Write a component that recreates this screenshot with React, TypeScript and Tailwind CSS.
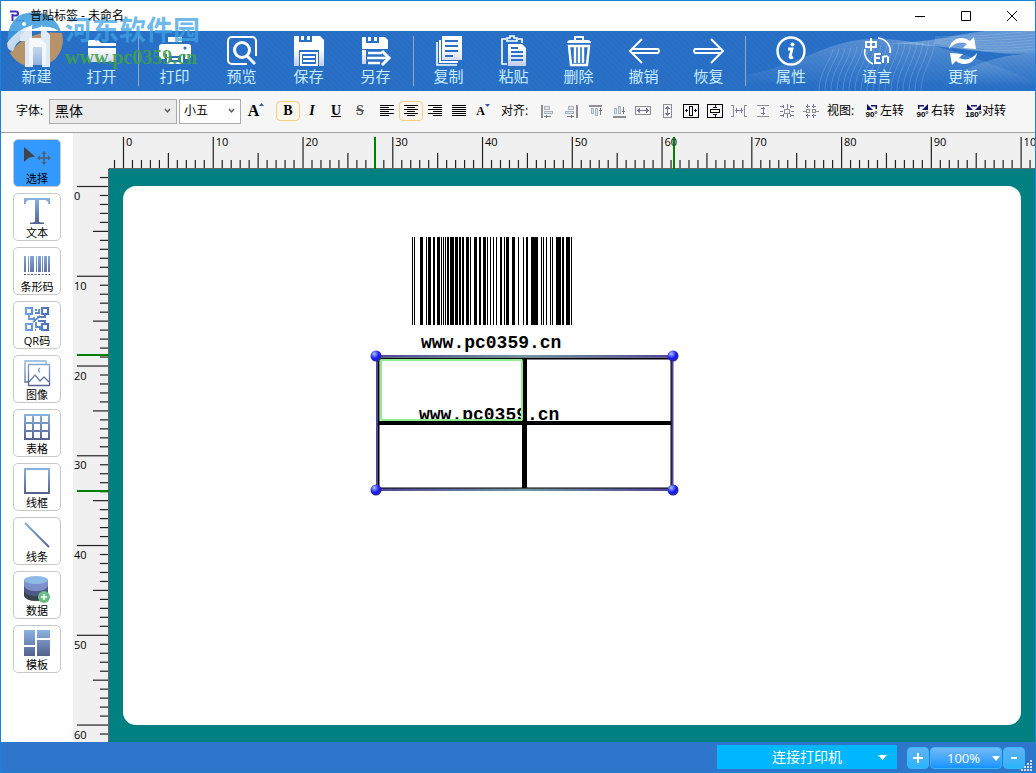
import type { ReactNode } from "react";
import clsx from "clsx";

const MM = 8.976;

/* ---------- ribbon icons (32 x 32) ---------- */

function RibbonIcon({ children }: { children: ReactNode }) {
  return (
    <svg width="32" height="32" viewBox="0 0 32 32" fill="none" stroke="white" strokeWidth="2.4" aria-hidden="true">
      {children}
    </svg>
  );
}

const newIcon = (
  <RibbonIcon>
    <path d="M8 3h11l6 6v21H8z" fill="url(#fade)" stroke="none" opacity="0.7" />
  </RibbonIcon>
);

const openIcon = (
  <RibbonIcon>
    <path d="M2 9V5h10l3 3h15v3H2z" fill="white" stroke="none" />
    <path d="M2 13h28v14H2z" fill="url(#fade)" stroke="none" />
  </RibbonIcon>
);

const printIcon = (
  <RibbonIcon>
    <path d="M9 2h14v5H9z" fill="white" stroke="none" />
    <path d="M3 9h26q3 0 3 3v9q0 3-3 3h-3v-5H6v5H3q-3 0-3-3v-9q0-3 3-3z" fill="white" stroke="none" />
    <path d="M9 20h14v8H9z" fill="#2a70c8" strokeWidth="2" />
    <path d="M13 24h6" strokeWidth="2" />
    <circle cx="26" cy="13" r="1.500" fill="#2a70c8" stroke="none" />
  </RibbonIcon>
);

const previewIcon = (
  <RibbonIcon>
    <path d="M21 29H6a4 4 0 0 1-4-4V6a4 4 0 0 1 4-4h20a4 4 0 0 1 4 4v15" strokeWidth="2" />
    <circle cx="16" cy="15" r="7.500" strokeWidth="3" />
    <path d="m21 21 8 8" strokeWidth="3" />
  </RibbonIcon>
);

const saveIcon = (
  <RibbonIcon>
    <path d="M1 1h5v6h13V1h8l4 4v10H1z" fill="white" stroke="none" />
    <path d="M8 1h3v4H8zM14 1h3v4h-3z" fill="white" stroke="none" />
    <path d="M1 15h5v16H1zM26 15h5v16h-5z" fill="url(#fade)" stroke="none" />
    <path d="M8 18h16v12H8z" fill="#2a70c8" strokeWidth="2" />
    <path d="M10 22h12M10 26h12" strokeWidth="2" />
  </RibbonIcon>
);

const saveAsIcon = (
  <RibbonIcon>
    <path d="M2 2h4v6h13V2h6l3 3v9H2z" fill="white" stroke="none" />
    <path d="M8 2h3v4H8zM14 2h3v4h-3z" fill="white" stroke="none" />
    <path d="M2 15h4v14H2z" fill="url(#fade)" stroke="none" />
    <path d="M8 18h14M8 28h12M7 23h21" strokeWidth="2.600" />
    <path d="m22 16 7 7-7 7" strokeWidth="3" />
  </RibbonIcon>
);

const copyIcon = (
  <RibbonIcon>
    <path d="M9 1h20v24H9z" fill="url(#fade)" stroke="none" />
    <path d="M12 6h13M12 11h13M12 16h13M12 21h8" stroke="#2a70c8" strokeWidth="2" />
    <path d="M7 5v22h18" strokeWidth="2" />
    <path d="M4 7v23h20" strokeWidth="1.600" />
  </RibbonIcon>
);

const pasteIcon = (
  <RibbonIcon>
    <path d="M8 4H4v25h5M20 4h4v4" strokeWidth="1.600" />
    <path d="M9 6V3h3V1h4v2h3v3z" strokeWidth="1.600" />
    <path d="M10 9h14l4 4v18H10z" fill="url(#fade)" stroke="none" />
    <path d="M13 13h7M13 17h12M13 21h12M13 25h12" stroke="#2a70c8" strokeWidth="1.800" />
  </RibbonIcon>
);

const deleteIcon = (
  <RibbonIcon>
    <path d="M4 8q0-3 4-3h16q4 0 4 3z" fill="white" stroke="none" />
    <path d="M12 5V2h8v3" strokeWidth="2" />
    <path d="M6 11h20l-2 19H8z" strokeWidth="2.400" />
    <path d="M12 12v16M16 12v16M20 12v16" strokeWidth="2.400" />
  </RibbonIcon>
);

const undoIcon = (
  <RibbonIcon>
    <path d="M14 4 2 16l12 12" strokeWidth="2" />
    <path d="M4 14h26q2 2 0 4H4" strokeWidth="1.800" />
  </RibbonIcon>
);

const redoIcon = (
  <RibbonIcon>
    <path d="m18 4 12 12-12 12" strokeWidth="2" />
    <path d="M28 14H2q-2 2 0 4h26" strokeWidth="1.800" />
  </RibbonIcon>
);

const infoIcon = (
  <RibbonIcon>
    <circle cx="16" cy="16" r="13.500" strokeWidth="2.400" />
    <circle cx="17.500" cy="9.500" r="2" fill="white" stroke="none" />
    <path d="M13 14h4l-2 8q0 1.500 3 0" strokeWidth="2.800" />
  </RibbonIcon>
);

const languageIcon = (
  <RibbonIcon>
    <path d="M17 3a13 13 0 0 1 12 15M4 14a13 13 0 0 0 8 15" strokeWidth="1.600" />
    <path d="M5 7h10v5H5zM10 3v13" strokeWidth="2" />
    <path d="M20 19h-6v9h6M14 23h5M22 28v-6q5-2 5 1v5" strokeWidth="2" />
  </RibbonIcon>
);

const updateArrow = "M2 14C3 5 14-1 23 6l4-4 2 12-13-1 4-4C13 6 7 8 2 14z";

const updateIcon = (
  <RibbonIcon>
    <g fill="white" stroke="none">
      <path d={updateArrow} />
      <path d={updateArrow} transform="rotate(180 16 16)" />
    </g>
  </RibbonIcon>
);

type RibbonItem = { label: string; icon: ReactNode };

const ribbonGroups: { width: string; items: RibbonItem[] }[] = [
  { width: "w-[65px]", items: [{ label: "新建", icon: newIcon }, { label: "打开", icon: openIcon }] },
  {
    width: "w-[67px]",
    items: [
      { label: "打印", icon: printIcon },
      { label: "预览", icon: previewIcon },
      { label: "保存", icon: saveIcon },
      { label: "另存", icon: saveAsIcon }
    ]
  },
  {
    width: "w-[65px]",
    items: [
      { label: "复制", icon: copyIcon },
      { label: "粘贴", icon: pasteIcon },
      { label: "删除", icon: deleteIcon },
      { label: "撤销", icon: undoIcon },
      { label: "恢复", icon: redoIcon }
    ]
  },
  {
    width: "w-[86px]",
    items: [
      { label: "属性", icon: infoIcon },
      { label: "语言", icon: languageIcon },
      { label: "更新", icon: updateIcon }
    ]
  }
];

function Waves() {
  return (
    <svg className="absolute inset-y-0 right-0" width="300" height="60" viewBox="0 0 300 60" fill="none" aria-hidden="true">
      <path d="M10 44C70 34 90 8 140 8S230 22 300 50V60H10z" fill="url(#mist)" />
      <path d="M150 12C200 12 220 3 250 0H300V22C260 26 220 14 150 12z" fill="white" opacity="0.28" />
      <path d="M200 60C230 34 260 24 300 22V60z" fill="url(#mist)" />
      <g stroke="white" strokeWidth="1" opacity="0.16">
        {Array.from({ length: 18 }, (_, i) => (
          <path key={i} d={`M${84 + i * 6} 60C${84 + i * 6} 40 ${96 + i * 6} 30 ${98 + i * 6} ${18 - i / 2}`} />
        ))}
        {Array.from({ length: 7 }, (_, i) => (
          <path key={i} d={`M200 ${12 - i}Q250 ${24 - i * 3} 300 ${18 - i * 3}`} />
        ))}
      </g>
    </svg>
  );
}

function Ribbon() {
  return (
    <nav className="relative flex h-[60px] shrink-0 items-stretch overflow-hidden bg-[#2971c7] bg-[repeating-linear-gradient(45deg,#0000_0_2px,#0d4da014_2px_4px)] pl-[3px]">
      <Waves />
      {ribbonGroups.map((group, i) => (
        <div key={group.items[0].label} className="relative flex">
          {i > 0 ? <span className="my-[5px] mr-[2px] ml-1 w-px bg-[#9aa5b5]" /> : null}
          {group.items.map((item) => (
            <button key={item.label} className={clsx("flex flex-col items-center pt-1", group.width)}>
              {item.icon}
              <span className="text-[15px] leading-[18px] text-[#c9edff]">{item.label}</span>
            </button>
          ))}
        </div>
      ))}
    </nav>
  );
}

/* ---------- format bar ---------- */

function Chevron({ className }: { className?: string }) {
  return (
    <svg className={clsx("pointer-events-none absolute top-[9px]", className)} width="7" height="6" viewBox="0 0 7 6" fill="none" stroke="#555" strokeWidth="1.300" aria-hidden="true">
      <path d="m1 1 2.500 3L6 1" />
    </svg>
  );
}

function SmallIcon({ children }: { children: ReactNode }) {
  return (
    <svg width="16" height="16" viewBox="0 0 16 16" fill="none" stroke="#8d8d94" shapeRendering="crispEdges" aria-hidden="true">
      {children}
    </svg>
  );
}

function ToolButton({ label, active, children }: { label: string; active?: boolean; children: ReactNode }) {
  return (
    <button
      aria-label={label}
      aria-pressed={active}
      className={clsx("flex h-5 w-6 items-center justify-center", active && "rounded-sm border border-[#f6cd85] bg-[#fbf6ec]")}
    >
      {children}
    </button>
  );
}

const paragraphs = [
  { label: "左对齐", lines: "M1 2.500h14M1 4.500h9M1 6.500h14M1 8.500h9M1 10.500h14M1 12.500h9" },
  { label: "居中", lines: "M1 2.500h14M4 4.500h8M1 6.500h14M4 8.500h8M1 10.500h14M4 12.500h8" },
  { label: "右对齐", lines: "M1 2.500h14M6 4.500h9M1 6.500h14M6 8.500h9M1 10.500h14M6 12.500h9" },
  { label: "两端对齐", lines: "M1 2.500h14M1 4.500h14M1 6.500h14M1 8.500h14M1 10.500h14M1 12.500h14" }
];

const arrangeIcons: { label: string; icon: ReactNode }[] = [
  {
    label: "左边对齐",
    icon: (
      <SmallIcon>
        <path d="M2 2h1v12H2z" />
        <path d="M5.500 3.500h5v3h-5zM5.500 8.500h8v2h-8z" fill="#dfe7ee" stroke="#a9b2ba" />
        <path d="M5 13.500h7M7.500 12v3M6.500 13v1" stroke="#777" />
      </SmallIcon>
    )
  },
  {
    label: "右边对齐",
    icon: (
      <SmallIcon>
        <path d="M13 2h1v12h-1z" />
        <path d="M5.500 3.500h5v3h-5zM2.500 8.500h8v2h-8z" fill="#dfe7ee" stroke="#a9b2ba" />
        <path d="M4 13.500h7M8.500 12v3M9.500 13v1" stroke="#777" />
      </SmallIcon>
    )
  },
  {
    label: "顶部对齐",
    icon: (
      <SmallIcon>
        <path d="M2 2h12v1H2z" />
        <path d="M4.500 5.500h2v5h-2zM8.500 5.500h2v7h-2z" fill="#dfe7ee" stroke="#a9b2ba" />
        <path d="M13.500 5v7M12 7.500h3" stroke="#777" />
      </SmallIcon>
    )
  },
  {
    label: "底部对齐",
    icon: (
      <SmallIcon>
        <path d="M2 13h12v1H2z" />
        <path d="M3.500 5.500h2v5h-2zM7.500 3.500h2v7h-2z" fill="#dfe7ee" stroke="#a9b2ba" />
        <path d="M12.500 4v7M11 8.500h3" stroke="#777" />
      </SmallIcon>
    )
  },
  {
    label: "等宽",
    icon: (
      <SmallIcon>
        <path d="M.5 3.500h15v8H.5z" />
        <path d="M2 7.500h12M4.500 5v5M11.500 5v5M3.500 6v3M12.500 6v3" stroke="#7774a8" />
      </SmallIcon>
    )
  },
  {
    label: "等高",
    icon: (
      <SmallIcon>
        <path d="M4.500 1.500h8v13h-8z" />
        <path d="M8.500 3v10M6 5.500h5M6 10.500h5M7 4.500h3M7 11.500h3" stroke="#7774a8" />
      </SmallIcon>
    )
  },
  {
    label: "水平居中",
    icon: (
      <SmallIcon>
        <path d="M.5 1.500h15v13H.5zM6.500 3.500h3v9h-3z" stroke="#000" />
        <path d="M2 7.500h3M11 7.500h3M3.500 6v3M12.500 6v3" stroke="#111140" />
      </SmallIcon>
    )
  },
  {
    label: "垂直居中",
    icon: (
      <SmallIcon>
        <path d="M.5 1.500h15v13H.5zM3.500 6.500h9v3h-9z" stroke="#000" />
        <path d="M8 2v3M8 11v3M6 4.500h4M6 11.500h4" stroke="#111140" />
      </SmallIcon>
    )
  },
  {
    label: "水平间距",
    icon: (
      <SmallIcon>
        <path d="M0 2.500h2.500v11H0M16 2.500h-2.500v11H16" />
        <path d="M4 7.500h8M5.500 5v5M10.500 5v5" stroke="#7774a8" />
      </SmallIcon>
    )
  },
  {
    label: "垂直间距",
    icon: (
      <SmallIcon>
        <path d="M2 2.500h12M2 13.500h12" />
        <path d="M8 4v8M6 5.500h4M6 10.500h4" stroke="#7774a8" />
      </SmallIcon>
    )
  },
  {
    label: "水平分布",
    icon: (
      <SmallIcon>
        <path d="M5.500 6.500h5v4h-5z" />
        <path d="M1 3.500h4M11 3.500h4M1 12.500h4M11 12.500h4M4.500 2v3M11.500 2v3M4.500 11v3M11.500 11v3M8.500 1v5M8.500 11v4M1 8.500h3M12 8.500h3" stroke="#7774a8" />
      </SmallIcon>
    )
  },
  {
    label: "垂直分布",
    icon: (
      <SmallIcon>
        <path d="M3.500 6.500h3v3h-3zM9.500 6.500h3v3h-3zM0 8h3M13 8h3" />
        <path d="M4.500 1v4M10.500 1v4M4.500 11v4M10.500 11v4M3 3.500h4M9 3.500h4M3 12.500h4M9 12.500h4" stroke="#7774a8" />
      </SmallIcon>
    )
  }
];

function RotateButton({ label, angle, d }: { label: string; angle: string; d: string }) {
  return (
    <button className="flex items-center gap-px text-xs">
      <span className="flex w-[15px] flex-col items-center font-['Liberation_Sans'] text-[8px] leading-[8px] font-bold">
        <svg width="14" height="7" viewBox="0 0 14 7" aria-hidden="true">
          <path d={d} fill="#10106a" />
        </svg>
        {angle}
      </span>
      {label}
    </button>
  );
}

function FontSizeIcon({ down }: { down?: boolean }) {
  return (
    <>
      <span className={clsx("font-['Liberation_Serif'] leading-4 font-bold", down ? "text-xs" : "text-base")}>A</span>
      <svg width="5" height="12" viewBox="0 0 5 12" className="self-start" aria-hidden="true">
        <path d={down ? "M0 3h5L2.500 6z" : "M0 5h5L2.500 2z"} fill="#3a54a0" />
      </svg>
    </>
  );
}

function FormatBar() {
  return (
    <div className="flex h-[42px] shrink-0 items-center overflow-hidden border-b border-[#a0a0a0] bg-[#f6f6f6] pb-px pl-[15px] text-xs whitespace-nowrap">
      <label htmlFor="font" className="w-[33px]">字体:</label>
      <div className="relative">
        <select id="font" className="h-[25px] w-32 appearance-none border border-[#acacac] bg-[#ebebeb] pl-[5px] text-sm leading-[22px]">
          <option>黑体</option>
        </select>
        <Chevron className="right-[6px]" />
      </div>
      <div className="relative ml-[2px]">
        <select aria-label="字号" className="h-[25px] w-[62px] appearance-none border border-[#acacac] bg-white pl-1 text-xs leading-[22px]">
          <option>小五</option>
        </select>
        <Chevron className="right-[6px]" />
      </div>
      <div className="ml-[3px] flex">
        <ToolButton label="增大字号"><FontSizeIcon /></ToolButton>
      </div>
      <div className="ml-2 flex font-['Liberation_Serif'] text-sm leading-4 font-bold">
        <ToolButton label="加粗" active>B</ToolButton>
        <ToolButton label="倾斜"><i>I</i></ToolButton>
        <ToolButton label="下划线"><u>U</u></ToolButton>
        <ToolButton label="删除线"><s className="text-[#555]">S</s></ToolButton>
      </div>
      <div className="ml-[3px] flex">
        {paragraphs.map((p) => (
          <ToolButton key={p.label} label={p.label} active={p.label === "居中"}>
            <svg width="16" height="16" viewBox="0 0 16 16" stroke="#000" shapeRendering="crispEdges" aria-hidden="true">
              <path d={p.lines} />
            </svg>
          </ToolButton>
        ))}
        <ToolButton label="减小字号"><FontSizeIcon down /></ToolButton>
      </div>
      <span className="ml-[6px] w-[34px]">对齐:</span>
      <div className="flex">
        {arrangeIcons.map((a) => (
          <ToolButton key={a.label} label={a.label}>{a.icon}</ToolButton>
        ))}
      </div>
      <span className="ml-1 w-[37px]">视图:</span>
      <div className="flex gap-[11px]">
        <RotateButton label="左转" angle="90°" d="M2 0v6h6zM6 1h6v4h-1.500V2.500H6z" />
        <RotateButton label="右转" angle="90°" d="M12 0v6H6zM8 1H2v4h1.500V2.500H8z" />
        <RotateButton label="对转" angle="180°" d="M0 0v6h6zM14 0v6H8zM4 1h6v1.500H4z" />
      </div>
    </div>
  );
}

/* ---------- tool column (26 x 26 icons) ---------- */

const tools: { label: string; icon: ReactNode }[] = [
  {
    label: "选择",
    icon: (
      <>
        <path d="M0 3v15l5-4.500 6-1z" fill="#404349" />
        <path d="M20 9v10M15 14h10" stroke="#4b5f7c" strokeWidth="1.600" />
        <path d="m20 7 2.500 3h-5zM20 21l2.500-3h-5zM13 14l3-2.500v5zM27 14l-3-2.500v5z" fill="#4b5f7c" />
      </>
    )
  },
  {
    label: "文本",
    icon: <path d="M0 0h26v6h-1.500Q24 2 20 2h-5v21q0 1.500 5 1.500V26H6v-1.500q5 0 5-1.500V2H6Q2 2 1.500 6H0z" fill="url(#steel)" />
  },
  {
    label: "条形码",
    icon: (
      <>
        <path d="M0 4h2v16H0zM4 4h1v16H4zM6 4h4v16H6zM12 4h1v16h-1zM14 4h3v16h-3zM18 4h1v16h-1zM20 4h3v16h-3zM24 4h2v16h-2z" fill="url(#steel)" />
        <path d="M0 22.500h26" stroke="#56618b" strokeDasharray="2 1.500" />
      </>
    )
  },
  {
    label: "QR码",
    icon: (
      <g fill="none" stroke="url(#sky)" strokeWidth="2.200">
        <path d="M2 2h6v6H2zM18 2h6v6h-6zM2 18h6v6H2zM18 18h6v6h-6z" />
        <path d="M11 7h4V3M11 4h2M5 9v4h5v-2M9 16l7-6M13 11h8V9M14 15h7v3M12 16v5h4v3M12 24h-1" strokeWidth="1.800" />
      </g>
    )
  },
  {
    label: "图像",
    icon: (
      <g fill="none" stroke="url(#steel)" strokeWidth="1.300">
        <path d="M4 22H1V1h21v3" />
        <path d="M4.500 4.500h21v21h-21z" fill="white" />
        <path d="m5 22 6-7 5 6 4-4 5 5" />
        <path d="M16 8q-3 2 0 4" />
      </g>
    )
  },
  {
    label: "表格",
    icon: (
      <path
        fillRule="evenodd"
        fill="url(#steel)"
        d="M0 0h26v26H0zM2 2v6h6V2zM10 2v6h6V2zM18 2v6h6V2zM2 10v6h6v-6zM10 10v6h6v-6zM18 10v6h6v-6zM2 18v6h6v-6zM10 18v6h6v-6zM18 18v6h6v-6z"
      />
    )
  },
  { label: "线框", icon: <path fillRule="evenodd" fill="url(#steel)" d="M0 0h26v26H0zM2 2v22h22V2z" /> },
  { label: "线条", icon: <path d="m1 1 24 24" stroke="url(#steel)" strokeWidth="2" /> },
  {
    label: "数据",
    icon: (
      <>
        <path d="M0 14v6q2 5 12 5t12-5v-6z" fill="#39444f" />
        <path d="M0 9v6q2 5 12 5t12-5V9z" fill="#4c5a86" />
        <path d="M0 4v6q2 5 12 5t12-5V4z" fill="#7c8fca" />
        <ellipse cx="12" cy="4" rx="12" ry="4" fill="#8fbbe4" />
        <circle cx="20" cy="21" r="6" fill="#6bbd86" />
        <path d="M20 18v6M17 21h6" stroke="white" strokeWidth="1.500" />
      </>
    )
  },
  { label: "模板", icon: <path d="M0 0h11v15H0zM13 0h13v8H13zM13 10h13v16H13zM0 17h11v9H0z" fill="url(#steel)" /> }
];

function ToolColumn() {
  return (
    <aside className="flex w-[72px] shrink-0 flex-col gap-[6px] bg-white pt-[6px] pl-3">
      {tools.map((tool, i) => (
        <button
          key={tool.label}
          className={clsx(
            "flex size-12 shrink-0 flex-col items-center rounded-[5px] border border-[#c8c8c8] pt-1",
            i === 0 && "bg-[#3399ff]"
          )}
        >
          <svg width="26" height="26" viewBox="0 0 26 26" className="shrink-0 overflow-visible" aria-hidden="true">
            {tool.icon}
          </svg>
          <span className="mt-px text-[11px] leading-4">{tool.label}</span>
        </button>
      ))}
    </aside>
  );
}

/* ---------- rulers ---------- */

// ticks from -1 mm up to the far edge of the window
function ticksFor(pixels: number) {
  return Array.from({ length: Math.floor(pixels / MM) + 2 }, (_, i) => i - 1);
}

function tickLength(n: number) {
  if (n % 10 === 0) return 32;
  return n % 5 === 0 ? 16 : 9;
}

function TopRuler() {
  const ticks = ticksFor(window.innerWidth - 124);
  return (
    <svg className="block h-9 w-full shrink-0 bg-[#f0f0f0]" aria-hidden="true">
      {ticks.map((n) => (
        <path key={n} d={`M${50.5 + n * MM} 36v-${tickLength(n)}`} stroke="#222" strokeWidth="1.200" />
      ))}
      <path d="M36 35.500h4000" stroke="#666" />
      {ticks.filter((n) => n % 10 === 0).map((n) => (
        <text key={n} x={53 + n * MM} y="13" fontSize="11">{n}</text>
      ))}
      <path d="M302 4v32M601 4v32" stroke="green" strokeWidth="2" />
    </svg>
  );
}

function SideRuler() {
  const ticks = ticksFor(window.innerHeight - 218);
  return (
    <svg className="block h-full w-9 shrink-0 bg-[#f0f0f0]" aria-hidden="true">
      {ticks.map((n) => (
        <path key={n} d={`M36 ${17.5 + n * MM}h-${tickLength(n)}`} stroke="#222" strokeWidth="1.200" />
      ))}
      <path d="M35.500 0v4000" stroke="#666" />
      {ticks.filter((n) => n % 10 === 0).map((n) => (
        <text key={n} x="1" y={31 + n * MM} fontSize="11">{n}</text>
      ))}
      <path d="M4 186h32M4 322h32" stroke="green" strokeWidth="2" />
    </svg>
  );
}

/* ---------- label canvas ---------- */

// [offset, width] of every bar
const bars = [
  [0, 1], [2, 1], [8, 3], [14, 1], [16, 3], [21, 2], [25, 3], [29, 1], [31, 1], [33, 1], [35, 2], [38, 4],
  [43, 3], [47, 2], [50, 2], [54, 3], [58, 1], [62, 3], [67, 2], [71, 3], [75, 1], [78, 1], [81, 1], [84, 1],
  [88, 2], [92, 1], [94, 3], [100, 3], [106, 1], [111, 1], [114, 2], [119, 7], [129, 1], [131, 1], [134, 1],
  [138, 1], [140, 1], [144, 5], [150, 2], [154, 4], [159, 1]
];

function Caption({ className }: { className: string }) {
  return (
    <p className={clsx("absolute font-['Liberation_Mono'] text-lg leading-6 font-bold", className)}>www.pc0359.cn</p>
  );
}

function SelectedTable() {
  return (
    <svg className="absolute top-[164px] left-[247px]" width="310" height="146" viewBox="0 0 310 146" fill="none" aria-hidden="true">
      <path d="M8.500 8.500h293v130h-293z" stroke="#000" strokeWidth="2" />
      <path d="M6 5h297v2.500H6zM6 138.500h297v2.500H6z" fill="url(#edge)" />
      <path d="M7 6v134M302.500 6v134" stroke="#51459a" strokeWidth="2" />
      <path d="M154.500 8v130" stroke="#000" strokeWidth="5" />
      <path d="M9 73h292" stroke="#000" strokeWidth="4" />
      <rect x="11" y="10" width="141" height="60" rx="1" stroke="#90ee90" strokeWidth="2" />
      {[6, 303].map((x) => [6, 140].map((y) => <circle key={`${x}-${y}`} cx={x} cy={y} r="5.500" fill="url(#ball)" />))}
    </svg>
  );
}

function Canvas() {
  return (
    <div className="flex min-w-0 flex-1 bg-[#008080] px-[14px] py-[17px]">
      <div className="relative flex-1 overflow-hidden rounded-[13px] bg-white">
        <svg className="absolute top-[51px] left-[289px]" width="160" height="88" shapeRendering="crispEdges" role="img" aria-label="条形码">
          {bars.map(([x, w]) => (
            <rect key={x} x={x} width={w} height="88" />
          ))}
        </svg>
        <Caption className="top-[145px] left-[298px]" />
        <Caption className="top-[217px] left-[296px]" />
        <SelectedTable />
      </div>
    </div>
  );
}

/* ---------- window frame ---------- */

function TitleBar() {
  return (
    <header className="flex h-[30px] shrink-0 items-center bg-white pl-[9px] text-xs">
      <svg width="16" height="14" viewBox="0 0 16 14" fill="none" stroke="#3d2fc4" strokeWidth="2" aria-hidden="true">
        <path d="M0 2.500h6q2 0 2 2t-2 2H2.500M2.500 5v7" />
        <path d="M6 11.500h8" strokeWidth="1.500" strokeDasharray="2 1" />
      </svg>
      <h1 className="relative z-10 ml-1 flex-1">普贴标签 - 未命名</h1>
      <button aria-label="最小化" className="flex h-full w-[46px] items-center justify-center">
        <svg width="11" height="11" stroke="#000" aria-hidden="true"><path d="M0 5.500h10" /></svg>
      </button>
      <button aria-label="最大化" className="flex h-full w-[46px] items-center justify-center">
        <svg width="11" height="11" stroke="#000" fill="none" aria-hidden="true"><path d="M.5.5h9v9h-9z" /></svg>
      </button>
      <button aria-label="关闭" className="flex h-full w-[46px] items-center justify-center">
        <svg width="11" height="11" stroke="#000" aria-hidden="true"><path d="m0 0 10 10M10 0 0 10" /></svg>
      </button>
    </header>
  );
}

function Watermark() {
  return (
    <div className="pointer-events-none absolute top-[10px] left-1 flex items-start">
      <svg width="60" height="60" viewBox="0 0 60 60" opacity="0.85" aria-hidden="true">
        <path d="M13 5Q30-3 46 6Q55 14 56 22Q46 12 28 18Q12 24 4 36Q-1 18 13 5z" fill="#3c9bdd" />
        <path d="M57 22A27 27 0 0 1 38 55V34H28V56A27 27 0 0 1 5 42Q22 18 57 22z" fill="#cf9a5c" />
        <path d="M2 32Q12 18 28 14L20 26Q10 32 8 40Q2 40 2 32z" fill="white" opacity="0.85" />
        <path d="M15 30v-5L27 14v13h9V14l9 10v32h-8V36h-9v20h-8V30z" fill="white" />
        <circle cx="19" cy="13" r="2" fill="white" />
      </svg>
      <div>
        <p className="mt-1 text-[27px] leading-[30px] font-bold text-[#3fa4e4]/75">河东软件园</p>
        <p className="font-['Liberation_Serif'] text-xl leading-6 font-bold text-[#3fa04a]/90">www.pc0359.cn</p>
      </div>
    </div>
  );
}

function StatusBar() {
  return (
    <footer className="flex h-[30px] shrink-0 items-start justify-end bg-[#2d76cc] pt-[3px] text-white">
      <button className="relative h-6 w-[180px] bg-[#00b7ff] text-sm">
        连接打印机
        <svg className="absolute top-[10px] right-[10px]" width="9" height="5" fill="white" aria-hidden="true"><path d="M0 0h9L4.500 5z" /></svg>
      </button>
      <div className="mt-[2px] ml-[10px] flex gap-px text-[13px]">
        <button aria-label="放大" className="flex h-[22px] w-[22px] items-center justify-center rounded-sm border border-[#38b8f5] bg-linear-to-b from-[#5cb2f4] to-[#25b5fb]">
          <svg width="10" height="10" stroke="white" strokeWidth="2" aria-hidden="true"><path d="M5 0v10M0 5h10" /></svg>
        </button>
        <div className="relative">
          <select aria-label="缩放" className="h-[22px] w-[72px] appearance-none rounded-sm border border-[#38b8f5] bg-linear-to-b from-[#6db9f5] to-[#0a94ff] pl-4 leading-5">
            <option>100%</option>
          </select>
          <svg className="pointer-events-none absolute top-[9px] right-[2px]" width="8" height="5" fill="white" aria-hidden="true"><path d="M0 0h8L4 5z" /></svg>
        </div>
        <button aria-label="缩小" className="flex h-[22px] w-[22px] items-center justify-center rounded-sm border border-[#38b8f5] bg-linear-to-b from-[#5cb2f4] to-[#25b5fb]">
          <svg width="6" height="2" fill="white" aria-hidden="true"><path d="M0 0h6v2H0z" /></svg>
        </button>
      </div>
      <svg className="mr-[2px] -ml-1 self-end" width="12" height="12" fill="#d9dde6" aria-hidden="true">
        <path d="M9 0h2v2H9zM9 3h2v2H9zM6 3h2v2H6zM9 6h2v2H9zM6 6h2v2H6zM3 6h2v2H3zM9 9h2v2H9zM6 9h2v2H6zM3 9h2v2H3zM0 9h2v2H0z" />
      </svg>
    </footer>
  );
}

function Gradients() {
  return (
    <svg className="absolute size-0" aria-hidden="true">
      <defs>
        <linearGradient id="fade" gradientUnits="userSpaceOnUse" x1="0" y1="14" x2="0" y2="31">
          <stop stopColor="#fff" />
          <stop offset="1" stopColor="#c3cbea" />
        </linearGradient>
        <linearGradient id="steel" gradientUnits="userSpaceOnUse" x1="0" y1="0" x2="0" y2="26">
          <stop stopColor="#8ab4e0" />
          <stop offset="1" stopColor="#55608e" />
        </linearGradient>
        <linearGradient id="sky" gradientUnits="userSpaceOnUse" x1="0" y1="0" x2="26" y2="0">
          <stop stopColor="#6fa8ec" />
          <stop offset="1" stopColor="#4768ac" />
        </linearGradient>
        <linearGradient id="mist" x1="0" y1="0" x2="0" y2="1">
          <stop stopColor="#fff" stopOpacity="0.22" />
          <stop offset="0.9" stopColor="#fff" stopOpacity="0" />
        </linearGradient>
        <linearGradient id="edge" gradientUnits="userSpaceOnUse" x1="6" y1="0" x2="303" y2="0">
          <stop stopColor="#51459a" />
          <stop offset="0.5" stopColor="#7397a0" />
          <stop offset="1" stopColor="#51459a" />
        </linearGradient>
        <radialGradient id="ball" cx="0.35" cy="0.3" r="0.7">
          <stop stopColor="#a9c4e8" />
          <stop offset="0.6" stopColor="#1a1aff" />
          <stop offset="1" stopColor="#2a2a90" />
        </radialGradient>
      </defs>
    </svg>
  );
}

export default function App() {
  return (
    <div className="relative flex h-screen flex-col overflow-hidden border border-[#1883d7] bg-white font-['Open_Sans','Noto_Sans_CJK_SC',sans-serif] text-black">
      <Gradients />
      <TitleBar />
      <Ribbon />
      <FormatBar />
      <main className="flex min-h-0 flex-1">
        <ToolColumn />
        <section className="flex min-w-0 flex-1 flex-col">
          <TopRuler />
          <div className="flex min-h-0 flex-1">
            <SideRuler />
            <Canvas />
          </div>
        </section>
      </main>
      <StatusBar />
      <Watermark />
    </div>
  );
}
